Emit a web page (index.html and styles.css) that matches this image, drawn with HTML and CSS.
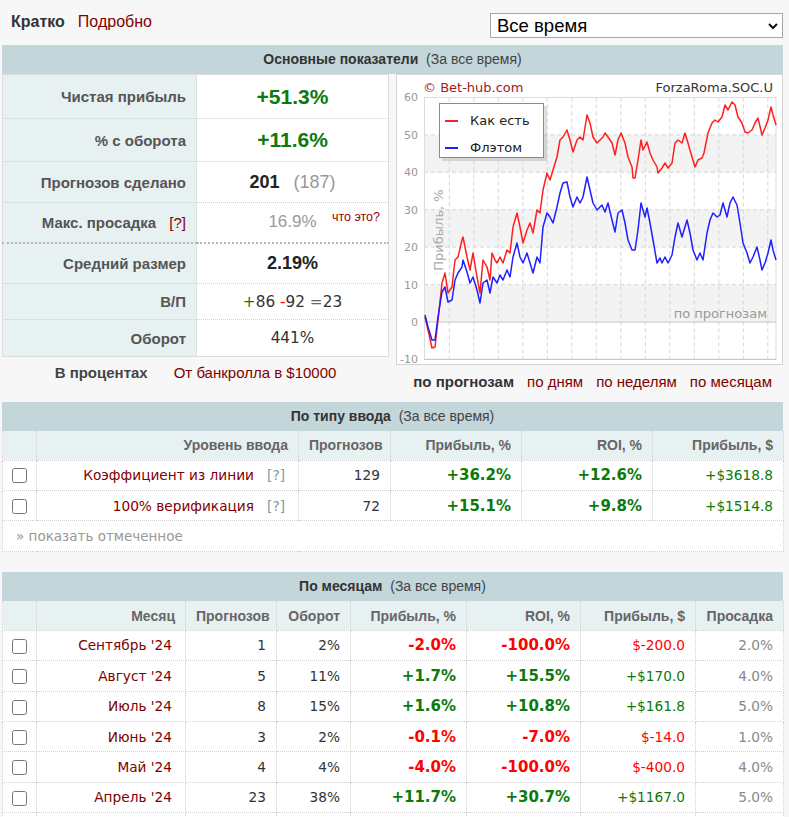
FILE: index.html
```html
<!DOCTYPE html>
<html lang="ru">
<head>
<meta charset="utf-8">
<title>ForzaRoma.SOC.U</title>
<link rel="stylesheet" href="styles.css">
</head>
<body>
<div class="page">
  <div class="topbar">
    <div class="views"><b class="view-active">Кратко</b><a class="link">Подробно</a></div>
    <div class="select-wrap">
      <select class="period"><option>Все время</option></select>
      <svg class="chevron" width="10" height="7" viewBox="0 0 10 7"><polyline points="1,1 5,5 9,1" fill="none" stroke="#111" stroke-width="2"/></svg>
    </div>
  </div>

  <section class="block">
    <div class="block-title"><b>Основные показатели</b>&nbsp; (За все время)</div>
    <div class="overview">
      <div class="overview-left">
        <table class="stats">
          <tr class="h44"><th>Чистая прибыль</th><td><span class="big green">+51.3%</span></td></tr>
          <tr class="h43"><th>% с оборота</th><td><span class="big green">+11.6%</span></td></tr>
          <tr class="h41"><th>Прогнозов сделано</th><td><span class="mid strong">201</span><span class="mid muted sub">(187)</span></td></tr>
          <tr class="h40"><th>Макс. просадка <span class="q-red">[?]</span></th><td class="note-cell"><span class="mid-n muted">16.9%</span><a class="note">что это?</a></td></tr>
          <tr class="h41 sep"><th>Средний размер</th><td><span class="mid strong">2.19%</span></td></tr>
          <tr class="h36"><th>В/П</th><td class="vp"><span class="green">+</span>86 <span class="red">-</span>92 <span class="gray">=</span>23</td></tr>
          <tr class="h37"><th>Оборот</th><td class="vp">441%</td></tr>
        </table>
        <div class="mode-tabs"><b>В процентах</b><a class="link">От банкролла в $10000</a></div>
      </div>
      <div class="overview-right">
        <svg class="chart" viewBox="396 74 387 291" width="387" height="291">
          <rect x="396.5" y="74.5" width="386" height="290" fill="#fff" stroke="#d4d4d4"/>
          <rect x="424" y="134.9" width="352" height="37.4" fill="#f3f3f3"/>
          <rect x="424" y="209.7" width="352" height="37.4" fill="#f3f3f3"/>
          <rect x="424" y="284.6" width="352" height="37.4" fill="#f3f3f3"/>
          <g stroke="#d6d6d6" stroke-dasharray="4 3" stroke-width="1">
            <line x1="424" x2="776" y1="134.9" y2="134.9"/>
            <line x1="424" x2="776" y1="172.3" y2="172.3"/>
            <line x1="424" x2="776" y1="209.7" y2="209.7"/>
            <line x1="424" x2="776" y1="247.1" y2="247.1"/>
            <line x1="424" x2="776" y1="284.6" y2="284.6"/>
            <line x1="449.3" x2="449.3" y1="97.4" y2="359.4"/>
            <line x1="473.8" x2="473.8" y1="97.4" y2="359.4"/>
            <line x1="498.3" x2="498.3" y1="97.4" y2="359.4"/>
            <line x1="522.8" x2="522.8" y1="97.4" y2="359.4"/>
            <line x1="547.3" x2="547.3" y1="97.4" y2="359.4"/>
            <line x1="571.8" x2="571.8" y1="97.4" y2="359.4"/>
            <line x1="596.3" x2="596.3" y1="97.4" y2="359.4"/>
            <line x1="620.8" x2="620.8" y1="97.4" y2="359.4"/>
            <line x1="645.3" x2="645.3" y1="97.4" y2="359.4"/>
            <line x1="669.8" x2="669.8" y1="97.4" y2="359.4"/>
            <line x1="694.3" x2="694.3" y1="97.4" y2="359.4"/>
            <line x1="718.8" x2="718.8" y1="97.4" y2="359.4"/>
            <line x1="743.3" x2="743.3" y1="97.4" y2="359.4"/>
            <line x1="767.8" x2="767.8" y1="97.4" y2="359.4"/>
          </g>
          <rect x="424.5" y="97.4" width="351.5" height="262" fill="none" stroke="#dcdcdc"/>
          <line x1="424" x2="776" y1="322" y2="322" stroke="#c4c4c4"/>
          <line x1="424" x2="776" y1="359.4" y2="359.4" stroke="#c4c4c4"/>
          <g class="axis" text-anchor="end">
            <text x="418" y="101.4">60</text>
            <text x="418" y="138.9">50</text>
            <text x="418" y="176.3">40</text>
            <text x="418" y="213.7">30</text>
            <text x="418" y="251.1">20</text>
            <text x="418" y="288.6">10</text>
            <text x="418" y="326">0</text>
            <text x="418" y="363.4">-10</text>
          </g>
          <text class="ylabel" x="442.5" y="230" transform="rotate(-90 442.5 230)" text-anchor="middle">Прибыль, %</text>
          <text class="plot-note" x="767" y="317.5" text-anchor="end">по прогнозам</text>
          <text class="copy" x="423" y="91.5">© Bet-hub.com</text>
          <text class="owner" x="773" y="91.5" text-anchor="end">ForzaRoma.SOC.U</text>
          <polyline fill="none" stroke="#ff1f1f" stroke-width="1.5" stroke-linejoin="round" points="425,317 428,330 432,348 435,347 438,320 442,283 445,273 448,293 452,287 455,260 458,257 462,240 463,237 467,257 470,270 473,253 477,277 480,293 483,260 487,267 490,280 492,253 495,260 497,263 500,257 503,263 507,250 510,253 513,227 517,213 520,227 523,243 527,230 530,223 533,233 537,210 540,213 543,190 547,173 550,180 553,170 557,157 560,140 563,137 567,130 570,140 573,152 577,140 580,137 583,140 587,115 590,123 593,137 597,143 600,140 603,137 605,133 608,137 612,143 615,155 618,140 621,133 625,143 628,157 632,167 633,178 635,178 638,160 641,140 643,150 647,142 650,153 653,160 657,167 658,173 662,168 665,163 668,168 672,163 675,143 678,140 682,143 685,133 688,143 692,157 695,167 698,160 702,158 704,153 708,133 712,123 715,120 718,122 722,117 725,105 728,110 732,102 735,105 738,117 742,123 745,132 748,133 752,130 755,123 758,118 762,135 765,128 768,120 771,107 773,115 776,125"/>
          <polyline fill="none" stroke="#1f1fff" stroke-width="1.5" stroke-linejoin="round" points="425,315 428,327 432,340 435,340 438,317 442,292 445,287 448,302 452,300 455,280 458,273 462,267 463,260 467,272 470,283 473,277 477,290 480,303 483,283 487,280 490,293 493,277 497,283 500,275 503,280 507,270 510,277 513,257 517,243 520,257 523,263 527,253 530,263 533,273 537,257 540,263 543,227 547,213 550,217 553,223 557,207 560,193 563,183 567,182 570,197 573,207 577,197 580,203 583,197 587,177 590,190 593,203 597,210 602,205 605,212 608,203 612,220 615,232 618,213 622,210 625,223 628,240 632,250 635,250 638,230 641,203 643,210 645,217 647,208 650,223 653,240 657,263 660,258 662,263 665,257 668,263 672,255 675,237 678,223 682,237 687,220 690,233 693,250 697,260 700,253 703,260 707,233 710,220 713,213 717,217 720,215 723,203 727,217 730,203 733,197 737,205 740,223 743,243 747,253 750,263 753,257 757,247 760,260 762,270 765,263 768,253 771,240 773,250 776,260"/>
          <rect x="442" y="106" width="105" height="55" fill="#000" opacity="0.12"/>
          <rect x="439.5" y="103.5" width="104" height="54" fill="#fff" stroke="#8a8a8a"/>
          <line x1="445" x2="458" y1="121" y2="121" stroke="#ff1f1f" stroke-width="2"/>
          <line x1="445" x2="458" y1="148" y2="148" stroke="#1f1fff" stroke-width="2"/>
          <text class="legend" x="470" y="125">Как  есть</text>
          <text class="legend" x="470" y="152">Флэтом</text>
        </svg>
        <div class="chart-tabs"><b>по прогнозам</b><a class="link">по дням</a><a class="link">по неделям</a><a class="link">по месяцам</a></div>
      </div>
    </div>
  </section>

  <section class="block">
    <div class="block-title"><b>По типу ввода</b>&nbsp; (За все время)</div>
    <table class="grid">
      <colgroup><col class="c-check"><col style="width:262px"><col style="width:92px"><col style="width:131px"><col style="width:131px"><col style="width:131px"></colgroup>
      <tr><th></th><th>Уровень ввода</th><th>Прогнозов</th><th>Прибыль, %</th><th>ROI, %</th><th>Прибыль, $</th></tr>
      <tr><td class="chk"><input type="checkbox"></td><td class="name"><a class="link">Коэффициент из линии</a>&nbsp;&nbsp; <span class="q">[?]</span></td><td>129</td><td class="b green">+36.2%</td><td class="b green">+12.6%</td><td class="green">+$3618.8</td></tr>
      <tr><td class="chk"><input type="checkbox"></td><td class="name"><a class="link">100% верификация</a>&nbsp;&nbsp; <span class="q">[?]</span></td><td>72</td><td class="b green">+15.1%</td><td class="b green">+9.8%</td><td class="green">+$1514.8</td></tr>
      <tr class="more"><td colspan="6">» показать отмеченное</td></tr>
    </table>
  </section>

  <section class="block">
    <div class="block-title"><b>По месяцам</b>&nbsp; (За все время)</div>
    <table class="grid">
      <colgroup><col class="c-check"><col style="width:149px"><col style="width:91px"><col style="width:74px"><col style="width:116px"><col style="width:114px"><col style="width:115px"><col style="width:88px"></colgroup>
      <tr><th></th><th>Месяц</th><th>Прогнозов</th><th>Оборот</th><th>Прибыль, %</th><th>ROI, %</th><th>Прибыль, $</th><th>Просадка</th></tr>
      <tr><td class="chk"><input type="checkbox"></td><td class="name"><a class="link">Сентябрь '24</a></td><td>1</td><td>2%</td><td class="b red">-2.0%</td><td class="b red">-100.0%</td><td class="red">$-200.0</td><td class="gray">2.0%</td></tr>
      <tr><td class="chk"><input type="checkbox"></td><td class="name"><a class="link">Август '24</a></td><td>5</td><td>11%</td><td class="b green">+1.7%</td><td class="b green">+15.5%</td><td class="green">+$170.0</td><td class="gray">4.0%</td></tr>
      <tr><td class="chk"><input type="checkbox"></td><td class="name"><a class="link">Июль '24</a></td><td>8</td><td>15%</td><td class="b green">+1.6%</td><td class="b green">+10.8%</td><td class="green">+$161.8</td><td class="gray">5.0%</td></tr>
      <tr><td class="chk"><input type="checkbox"></td><td class="name"><a class="link">Июнь '24</a></td><td>3</td><td>2%</td><td class="b red">-0.1%</td><td class="b red">-7.0%</td><td class="red">$-14.0</td><td class="gray">1.0%</td></tr>
      <tr><td class="chk"><input type="checkbox"></td><td class="name"><a class="link">Май '24</a></td><td>4</td><td>4%</td><td class="b red">-4.0%</td><td class="b red">-100.0%</td><td class="red">$-400.0</td><td class="gray">4.0%</td></tr>
      <tr><td class="chk"><input type="checkbox"></td><td class="name"><a class="link">Апрель '24</a></td><td>23</td><td>38%</td><td class="b green">+11.7%</td><td class="b green">+30.7%</td><td class="green">+$1167.0</td><td class="gray">5.0%</td></tr>
      <tr class="cut"><td class="chk"></td><td class="name"></td><td></td><td></td><td></td><td></td><td></td><td></td></tr>
    </table>
  </section>
</div>
</body>
</html>
```

FILE: styles.css
```css
* { box-sizing: border-box; }
html, body { margin: 0; padding: 0; }
body {
  background: #f7f7f7;
  font-family: "Liberation Sans", Arial, sans-serif;
  color: #333;
}
.page { width: 781px; margin-left: 2px; }

.link { color: #800000; text-decoration: none; }
.green { color: #0b7a0b; }
.red { color: #ff0000; }
.gray { color: #888; }

/* top bar */
.topbar {
  height: 45px;
  display: flex;
  justify-content: space-between;
  align-items: flex-start;
}
.views {
  display: flex;
  gap: 13px;
  padding: 13px 0 0 9px;
  font-size: 16px;
  line-height: 18px;
}
.view-active { color: #333; }
.select-wrap {
  position: relative;
  margin-top: 13px;
  width: 293px;
  height: 25px;
}
.period {
  -webkit-appearance: none;
  appearance: none;
  width: 100%;
  height: 25px;
  border: 1px solid #a6a6a6;
  border-radius: 0;
  background: #fff;
  font-family: "Liberation Sans", Arial, sans-serif;
  font-size: 18.5px;
  color: #000;
  padding: 0 0 0 6px;
  margin: 0;
}
.chevron { position: absolute; right: 5px; top: 10px; }

/* blocks */
.block-title {
  height: 29px;
  line-height: 29px;
  background: #c3d6da;
  text-align: center;
  font-size: 14px;
  color: #444;
}
.block-title b { color: #333; }

.overview { display: flex; gap: 7px; align-items: flex-start; }
.overview-left { width: 387px; }
.overview-right { width: 387px; }

.stats {
  width: 387px;
  border-collapse: collapse;
  background: #fff;
  border: 1px solid #dcdcdc;
}
.stats th {
  width: 194px;
  background: #e8f1f2;
  text-align: right;
  padding: 0 10px 0 0;
  font-size: 15px;
  color: #555;
  font-weight: bold;
  border-top: 1px dotted #cfcfcf;
  border-right: 1px solid #e0e0e0;
}
.stats td {
  text-align: center;
  padding: 0;
  border-top: 1px dotted #cfcfcf;
}
.stats tr:first-child th, .stats tr:first-child td { border-top: none; }
.stats tr.sep th, .stats tr.sep td { border-top: 2px dotted #b8b8b8; }
.h44 { height: 44px; }
.h43 { height: 43px; }
.h41 { height: 41px; }
.h40 { height: 40px; }
.h36 { height: 36px; }
.h37 { height: 37px; }

.big { font-size: 21px; font-weight: bold; }
.mid { font-size: 18px; }
.mid-n { font-size: 17px; }
.strong { font-weight: bold; color: #222; }
.muted { color: #999; }
.sub { margin-left: 14px; }
.q-red { color: #800000; font-weight: normal; margin-left: 9px; }
.note-cell { position: relative; }
.note {
  position: absolute;
  right: 8px;
  top: 7px;
  font-size: 12.5px;
  color: #990000;
}
.vp {
  font-family: "DejaVu Sans", Verdana, sans-serif;
  font-size: 15.3px;
  color: #333;
}
.vp .gray { color: #666; }

.mode-tabs {
  display: flex;
  justify-content: center;
  gap: 26px;
  padding-top: 7px;
  font-size: 15px;
  line-height: 17px;
}
.mode-tabs b { color: #444; }

.chart { display: block; }
.chart text { font-family: "DejaVu Sans", Verdana, sans-serif; }
.axis text { font-size: 11px; fill: #999; }
.ylabel { font-size: 13px; fill: #aaa; }
.plot-note { font-size: 13px; fill: #999; }
.copy { font-size: 13px; fill: #a01a1a; }
.owner { font-size: 13px; fill: #333; }
.legend { font-size: 13px; fill: #222; }

.chart-tabs {
  height: 37px;
  display: flex;
  justify-content: flex-end;
  gap: 13px;
  padding: 8px 11px 0 0;
  font-size: 15px;
  line-height: 17px;
}
.chart-tabs b { color: #333; }

/* grids */
.grid {
  width: 781px;
  table-layout: fixed;
  border-collapse: collapse;
  background: #fff;
  margin-bottom: 20px;
}
.c-check { width: 34px; }
.grid th {
  height: 29px;
  background: #e8f1f2;
  color: #666;
  font-size: 14px;
  font-weight: bold;
  text-align: right;
  padding: 0 10px;
  border: 1px dotted #d0d0d0;
  border-top: none;
  white-space: nowrap;
}
.grid td {
  height: 30.4px;
  padding: 0 10px;
  text-align: right;
  font-family: "DejaVu Sans", Verdana, sans-serif;
  font-size: 13.7px;
  color: #333;
  border: 1px dotted #d0d0d0;
  white-space: nowrap;
}
.grid td.name { padding-right: 13px; }
.grid td.b { font-weight: bold; font-size: 15px; }
.grid td.green { color: #0b7a0b; }
.grid td.red { color: #ff0000; }
.grid td.gray { color: #888; }
.grid td.chk { text-align: center; padding: 0; }
.grid td.chk input {
  width: 15px;
  height: 15px;
  margin: 0;
  vertical-align: middle;
}
.q { color: #8696a6; }
.grid tr.more td {
  text-align: left;
  padding-left: 13px;
  color: #999;
  font-size: 13.5px;
  height: 31px;
}
```
